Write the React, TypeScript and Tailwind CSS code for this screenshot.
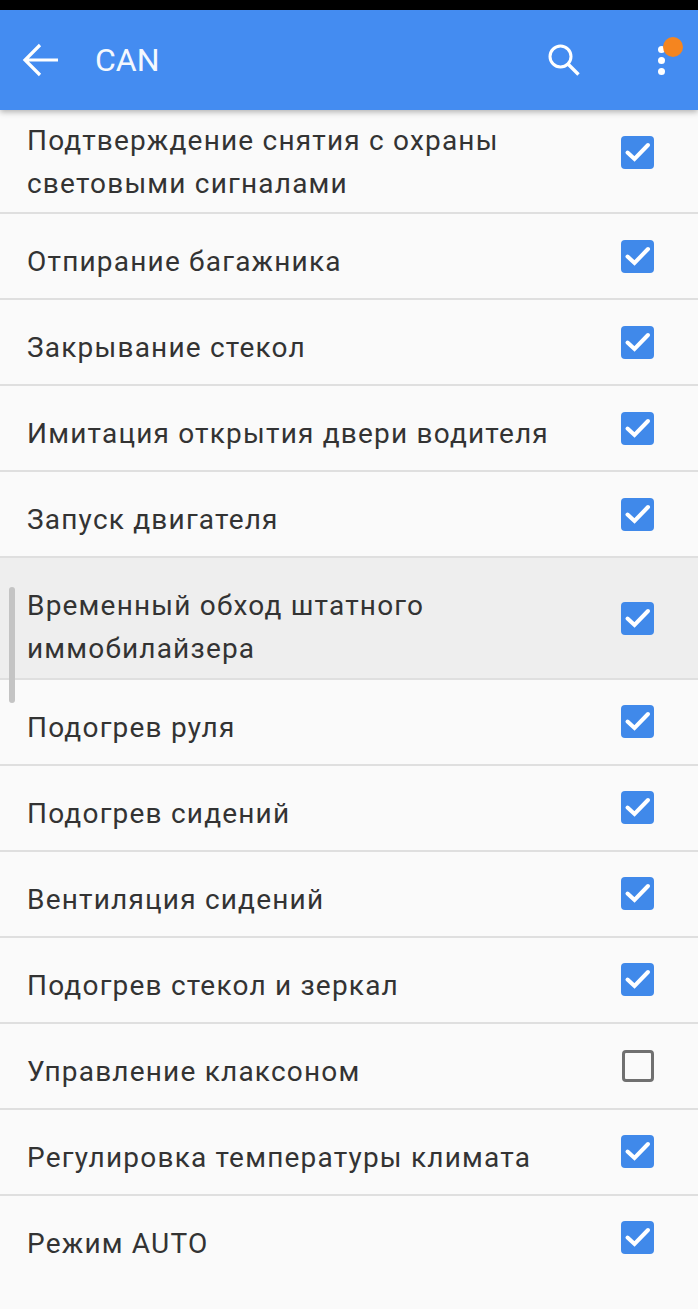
import React from "react";

type Row = { lines: string[]; checked: boolean; active?: boolean; cls: string; text: string; box: string };

const single = "h-[86px] border-b-2";
const singleText = "pt-[11px]";
const up = "mb-[1px]";
const level = "mb-0";

const rows: Row[] = [
  { lines: ["Подтверждение снятия с охраны", "световыми сигналами"], checked: true, cls: "h-[104px] border-b-2 pb-[16px]", text: "pt-[17px]", box: up },
  { lines: ["Отпирание багажника"], checked: true, cls: single, text: singleText, box: level },
  { lines: ["Закрывание стекол"], checked: true, cls: single, text: singleText, box: level },
  { lines: ["Имитация открытия двери водителя"], checked: true, cls: single, text: singleText, box: level },
  { lines: ["Запуск двигателя"], checked: true, cls: single, text: singleText, box: level },
  { lines: ["Временный обход штатного", "иммобилайзера"], checked: true, active: true, cls: "h-[122px] border-b-2", text: "pt-[18px]", box: level },
  { lines: ["Подогрев руля"], checked: true, cls: single, text: singleText, box: up },
  { lines: ["Подогрев сидений"], checked: true, cls: single, text: singleText, box: up },
  { lines: ["Вентиляция сидений"], checked: true, cls: single, text: singleText, box: up },
  { lines: ["Подогрев стекол и зеркал"], checked: true, cls: single, text: singleText, box: up },
  { lines: ["Управление клаксоном"], checked: false, cls: single, text: singleText, box: up },
  { lines: ["Регулировка температуры климата"], checked: true, cls: single, text: singleText, box: up },
  { lines: ["Режим AUTO"], checked: true, cls: "h-[86px] border-b-2 border-transparent", text: singleText, box: up },
];

function Check({ checked, box }: { checked: boolean; box: string }) {
  if (!checked) {
    return <div className={`h-[32px] w-[32px] rounded-[4px] border-[3px] border-[#707070] ${box}`} />;
  }
  return (
    <div className={`flex h-[33px] w-[33px] items-center justify-center rounded-[4px] bg-[#4089ea] ${box}`}>
      <svg width="33" height="33" viewBox="0 0 33 33" fill="none">
        <path d="M6.5 16.5 L13.5 23 L27 9" stroke="#fff" strokeWidth="4" strokeLinecap="round" />
      </svg>
    </div>
  );
}

export default function App() {
  return (
    <div className="relative h-[1309px] w-[698px] overflow-hidden bg-[#fafafa] font-['Roboto',sans-serif]">
      <div className="h-[10px] bg-black" />
      <header className="relative z-10 flex h-[100px] items-center bg-[#448cf1] shadow-[0_2px_6px_rgba(0,0,0,0.3)]">
        <svg className="ml-[22px]" width="38" height="36" viewBox="0 0 38 36" fill="none">
          <path d="M36 18 H3 M18 3 L3 18 L18 33" stroke="#fff" strokeWidth="3.2" />
        </svg>
        <div className="ml-[35px] text-[32px] leading-none text-[#f4f8fe]">CAN</div>
        <svg className="ml-auto mr-[77px]" width="34" height="34" viewBox="0 0 34 34" fill="none">
          <circle cx="13.5" cy="13.5" r="10.5" stroke="#fff" strokeWidth="3" />
          <path d="M21 21 L31.5 31.5" stroke="#fff" strokeWidth="3.4" />
        </svg>
        <div className="mr-[33px] flex flex-col gap-[4px]">
          <div className="h-[7px] w-[7px] rounded-full bg-white" />
          <div className="h-[7px] w-[7px] rounded-full bg-white" />
          <div className="h-[7px] w-[7px] rounded-full bg-white" />
        </div>
        <div className="absolute left-[663px] top-[27px] h-[20px] w-[20px] rounded-full bg-[#f5851f]" />
      </header>
      <div>
        {rows.map((r, i) => (
          <div
            key={i}
            className={`flex items-center justify-between pl-[27px] pr-[44px] ${r.cls} ${i === rows.length - 1 ? "" : "border-[#dfdfdf]"} ${r.active ? "bg-[#eeeeee]" : ""}`}
          >
            <div className={`text-[28px] leading-[43px] tracking-[1.2px] text-[#333333] ${r.text}`}>
              {r.lines.map((l) => (
                <div key={l}>{l}</div>
              ))}
            </div>
            <Check checked={r.checked} box={r.box} />
          </div>
        ))}
      </div>
      <div className="absolute left-[9px] top-[587px] h-[116px] w-[6px] rounded-full bg-[#c4c4c4]" />
    </div>
  );
}
